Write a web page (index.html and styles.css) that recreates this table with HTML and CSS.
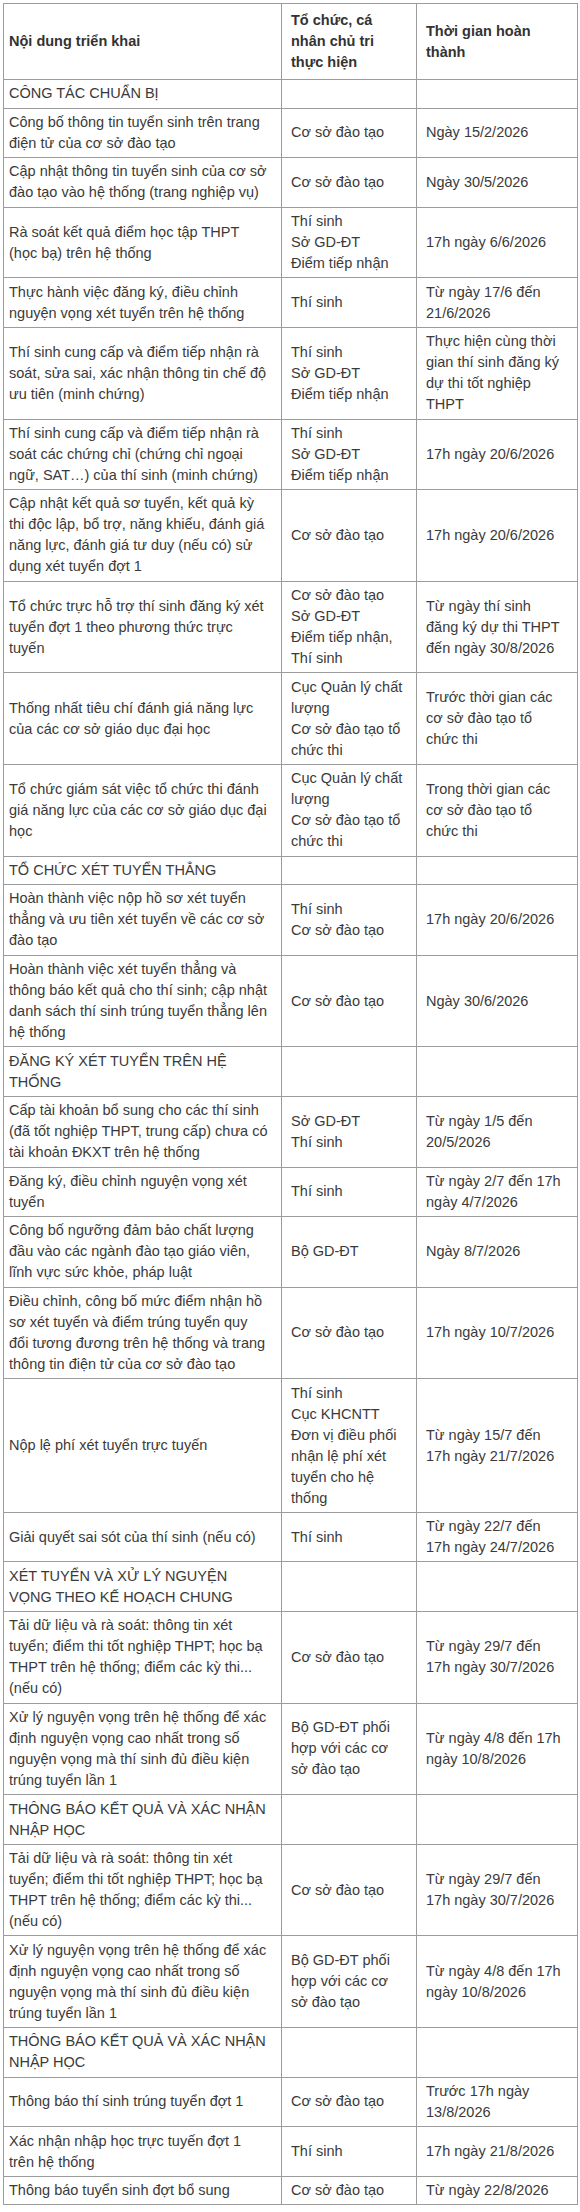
FILE: index.html
```html
<!DOCTYPE html>
<html lang="vi">
<head>
<meta charset="utf-8">
<title>Lịch tuyển sinh 2026</title>
<link rel="stylesheet" href="styles.css">
</head>
<body>
<table class="plan">
<colgroup><col class="c1"><col class="c2"><col class="c3"></colgroup>
<thead>
<tr><th>Nội dung triển khai</th><th>Tổ chức, cá<br>nhân chủ tri<br>thực hiện</th><th>Thời gian hoàn<br>thành</th></tr>
</thead>
<tbody>
<tr><td>CÔNG TÁC CHUẨN BỊ</td><td></td><td></td></tr>
<tr><td>Công bố thông tin tuyển sinh trên trang<br>điện tử của cơ sở đào tạo</td><td>Cơ sở đào tạo</td><td>Ngày 15/2/2026</td></tr>
<tr><td>Cập nhật thông tin tuyển sinh của cơ sở<br>đào tạo vào hệ thống (trang nghiệp vụ)</td><td>Cơ sở đào tạo</td><td>Ngày 30/5/2026</td></tr>
<tr><td>Rà soát kết quả điểm học tập THPT<br>(học bạ) trên hệ thống</td><td><p>Thí sinh</p><p>Sở GD-ĐT</p><p>Điểm tiếp nhận</p></td><td>17h ngày 6/6/2026</td></tr>
<tr><td>Thực hành việc đăng ký, điều chỉnh<br>nguyện vọng xét tuyển trên hệ thống</td><td>Thí sinh</td><td>Từ ngày 17/6 đến<br>21/6/2026</td></tr>
<tr><td>Thí sinh cung cấp và điểm tiếp nhận rà<br>soát, sửa sai, xác nhận thông tin chế độ<br>ưu tiên (minh chứng)</td><td><p>Thí sinh</p><p>Sở GD-ĐT</p><p>Điểm tiếp nhận</p></td><td>Thực hiện cùng thời<br>gian thí sinh đăng ký<br>dự thi tốt nghiệp<br>THPT</td></tr>
<tr><td>Thí sinh cung cấp và điểm tiếp nhận rà<br>soát các chứng chỉ (chứng chỉ ngoại<br>ngữ, SAT…) của thí sinh (minh chứng)</td><td><p>Thí sinh</p><p>Sở GD-ĐT</p><p>Điểm tiếp nhận</p></td><td>17h ngày 20/6/2026</td></tr>
<tr><td>Cập nhật kết quả sơ tuyển, kết quả kỳ<br>thi độc lập, bổ trợ, năng khiếu, đánh giá<br>năng lực, đánh giá tư duy (nếu có) sử<br>dụng xét tuyển đợt 1</td><td>Cơ sở đào tạo</td><td>17h ngày 20/6/2026</td></tr>
<tr><td>Tổ chức trực hỗ trợ thí sinh đăng ký xét<br>tuyển đợt 1 theo phương thức trực<br>tuyến</td><td><p>Cơ sở đào tạo</p><p>Sở GD-ĐT</p><p>Điểm tiếp nhận,<br>Thí sinh</p></td><td>Từ ngày thí sinh<br>đăng ký dự thi THPT<br>đến ngày 30/8/2026</td></tr>
<tr><td>Thống nhất tiêu chí đánh giá năng lực<br>của các cơ sở giáo dục đại học</td><td><p>Cục Quản lý chất<br>lượng</p><p>Cơ sở đào tạo tổ<br>chức thi</p></td><td>Trước thời gian các<br>cơ sở đào tạo tổ<br>chức thi</td></tr>
<tr><td>Tổ chức giám sát việc tổ chức thi đánh<br>giá năng lực của các cơ sở giáo dục đại<br>học</td><td><p>Cục Quản lý chất<br>lượng</p><p>Cơ sở đào tạo tổ<br>chức thi</p></td><td>Trong thời gian các<br>cơ sở đào tạo tổ<br>chức thi</td></tr>
<tr><td>TỔ CHỨC XÉT TUYỂN THẲNG</td><td></td><td></td></tr>
<tr><td>Hoàn thành việc nộp hồ sơ xét tuyển<br>thẳng và ưu tiên xét tuyển về các cơ sở<br>đào tạo</td><td><p>Thí sinh</p><p>Cơ sở đào tạo</p></td><td>17h ngày 20/6/2026</td></tr>
<tr><td>Hoàn thành việc xét tuyển thẳng và<br>thông báo kết quả cho thí sinh; cập nhật<br>danh sách thí sinh trúng tuyển thẳng lên<br>hệ thống</td><td>Cơ sở đào tạo</td><td>Ngày 30/6/2026</td></tr>
<tr><td>ĐĂNG KÝ XÉT TUYỂN TRÊN HỆ<br>THỐNG</td><td></td><td></td></tr>
<tr><td>Cấp tài khoản bổ sung cho các thí sinh<br>(đã tốt nghiệp THPT, trung cấp) chưa có<br>tài khoản ĐKXT trên hệ thống</td><td><p>Sở GD-ĐT</p><p>Thí sinh</p></td><td>Từ ngày 1/5 đến<br>20/5/2026</td></tr>
<tr><td>Đăng ký, điều chỉnh nguyện vọng xét<br>tuyển</td><td>Thí sinh</td><td>Từ ngày 2/7 đến 17h<br>ngày 4/7/2026</td></tr>
<tr><td>Công bố ngưỡng đảm bảo chất lượng<br>đầu vào các ngành đào tạo giáo viên,<br>lĩnh vực sức khỏe, pháp luật</td><td>Bộ GD-ĐT</td><td>Ngày 8/7/2026</td></tr>
<tr><td>Điều chỉnh, công bố mức điểm nhận hồ<br>sơ xét tuyển và điểm trúng tuyển quy<br>đổi tương đương trên hệ thống và trang<br>thông tin điện tử của cơ sở đào tạo</td><td>Cơ sở đào tạo</td><td>17h ngày 10/7/2026</td></tr>
<tr><td>Nộp lệ phí xét tuyển trực tuyến</td><td><p>Thí sinh</p><p>Cục KHCNTT</p><p>Đơn vị điều phối<br>nhận lệ phí xét<br>tuyển cho hệ<br>thống</p></td><td>Từ ngày 15/7 đến<br>17h ngày 21/7/2026</td></tr>
<tr><td>Giải quyết sai sót của thí sinh (nếu có)</td><td>Thí sinh</td><td>Từ ngày 22/7 đến<br>17h ngày 24/7/2026</td></tr>
<tr><td>XÉT TUYỂN VÀ XỬ LÝ NGUYỆN<br>VỌNG THEO KẾ HOẠCH CHUNG</td><td></td><td></td></tr>
<tr><td>Tải dữ liệu và rà soát: thông tin xét<br>tuyển; điểm thi tốt nghiệp THPT; học bạ<br>THPT trên hệ thống; điểm các kỳ thi...<br>(nếu có)</td><td>Cơ sở đào tạo</td><td>Từ ngày 29/7 đến<br>17h ngày 30/7/2026</td></tr>
<tr><td>Xử lý nguyện vọng trên hệ thống để xác<br>định nguyện vọng cao nhất trong số<br>nguyện vọng mà thí sinh đủ điều kiện<br>trúng tuyển lần 1</td><td>Bộ GD-ĐT phối<br>hợp với các cơ<br>sở đào tạo</td><td>Từ ngày 4/8 đến 17h<br>ngày 10/8/2026</td></tr>
<tr><td>THÔNG BÁO KẾT QUẢ VÀ XÁC NHẬN<br>NHẬP HỌC</td><td></td><td></td></tr>
<tr><td>Tải dữ liệu và rà soát: thông tin xét<br>tuyển; điểm thi tốt nghiệp THPT; học bạ<br>THPT trên hệ thống; điểm các kỳ thi...<br>(nếu có)</td><td>Cơ sở đào tạo</td><td>Từ ngày 29/7 đến<br>17h ngày 30/7/2026</td></tr>
<tr><td>Xử lý nguyện vọng trên hệ thống để xác<br>định nguyện vọng cao nhất trong số<br>nguyện vọng mà thí sinh đủ điều kiện<br>trúng tuyển lần 1</td><td>Bộ GD-ĐT phối<br>hợp với các cơ<br>sở đào tạo</td><td>Từ ngày 4/8 đến 17h<br>ngày 10/8/2026</td></tr>
<tr><td>THÔNG BÁO KẾT QUẢ VÀ XÁC NHẬN<br>NHẬP HỌC</td><td></td><td></td></tr>
<tr><td>Thông báo thí sinh trúng tuyển đợt 1</td><td>Cơ sở đào tạo</td><td>Trước 17h ngày<br>13/8/2026</td></tr>
<tr><td>Xác nhận nhập học trực tuyến đợt 1<br>trên hệ thống</td><td>Thí sinh</td><td>17h ngày 21/8/2026</td></tr>
<tr><td>Thông báo tuyển sinh đợt bổ sung</td><td>Cơ sở đào tạo</td><td>Từ ngày 22/8/2026</td></tr>
</tbody>
</table>
</body>
</html>
```
FILE: styles.css
```css
html, body {
  margin: 0;
  background: #ffffff;
}
body {
  padding: 3px 3px 4px 3px;
  font-family: "Liberation Sans", Arial, sans-serif;
  font-size: 14.5px;
  color: #3a3a3a;
}
.plan {
  border-collapse: collapse;
  table-layout: fixed;
  width: 574px;
}
.plan .c1 { width: 278px; }
.plan .c2 { width: 135px; }
.plan .c3 { width: 161px; }
.plan th,
.plan td {
  border: 1px solid #9c9c9c;
  padding: 3.3px 3px 3.3px 9px;
  line-height: 21px;
  vertical-align: middle;
  text-align: left;
  white-space: nowrap;
}
.plan th:first-child,
.plan td:first-child {
  padding-left: 5px;
}
.plan th {
  font-weight: bold;
  color: #333333;
  padding-top: 6px;
  padding-bottom: 6px;
}
.plan p {
  margin: 0;
}
```
